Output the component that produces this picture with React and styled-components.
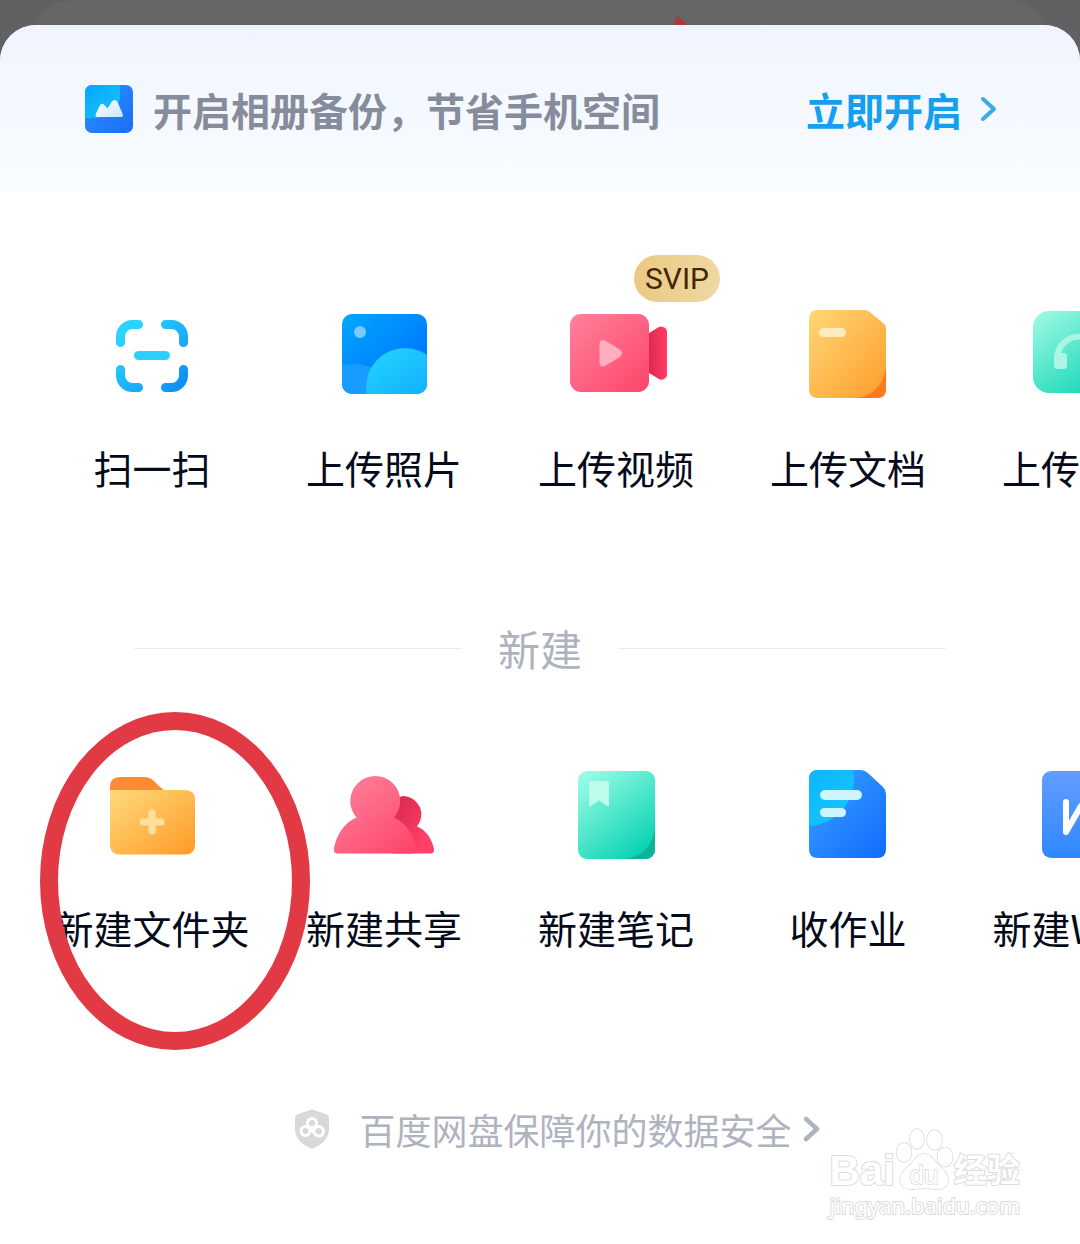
import React from 'react'
import styled, { createGlobalStyle } from 'styled-components';


const GlobalStyle = createGlobalStyle`
    * {
        box-sizing: border-box;
    }
    body {
        margin: 0;
        background: #616164;
        font-family: 'Noto Sans CJK SC', sans-serif;
        color: #050a1a;
    }
    button {
        margin: 0;
        padding: 0;
        border: 0;
        background: none;
        font: inherit;
        color: inherit;
        cursor: pointer;
    }
    svg {
        display: block;
        flex: none;
    }
`

const Page = styled.div`
    position: relative;
    display: flex;
    flex-direction: column;
    min-height: 100vh;
    overflow: hidden;
`

const PageBehind = styled.div`
    position: absolute;
    top: 0;
    left: 32px;
    right: 32px;
    height: 80px;
    border-radius: 40px 40px 0 0;
    background: #666;
`

const ArrowTip = styled.svg`
    position: absolute;
    top: 15px;
    left: 62%;
`

const Sheet = styled.main`
    position: relative;
    flex: 1;
    margin-top: 25px;
    border-radius: 36px 36px 0 0;
    background: #fff;
    overflow: hidden;
`

const Banner = styled.section`
    display: flex;
    align-items: center;
    height: 167px;
    padding: 0 83px 0 85px;
    background: linear-gradient(#f0f4ff, #f9fdff);
`

const BannerText = styled.p`
    flex: 1;
    margin: 0 0 0 20px;
    font-size: 39px;
    font-weight: 700;
    line-height: 48px;
    color: #878c9c;
`

const BannerLink = styled.a`
    display: flex;
    align-items: center;
    gap: 18px;
    font-size: 39px;
    font-weight: 700;
    line-height: 48px;
    color: #159ff0;
    text-decoration: none;
`

const Section = styled.section`
    position: relative;
`

const Row = styled.div`
    display: flex;
    padding: ${props => props.$top}px 0 12px 36px;
    overflow: hidden;
`

const Item = styled.button`
    position: relative;
    display: flex;
    flex: 0 0 calc(100% / 4.5);
    flex-direction: column;
    align-items: center;
    gap: 36px;
    font-size: 39px;
    line-height: 48px;
    white-space: nowrap;
`

const Badge = styled.span`
    position: absolute;
    top: -48px;
    left: calc(50% + 18px);
    padding: 0 11px;
    border-radius: 24px;
    background: linear-gradient(90deg, #eac983, #efd8a2);
    font-family: Roboto, sans-serif;
    font-size: 30px;
    line-height: 47px;
    color: #432508;
`

const Divider = styled.div`
    display: flex;
    align-items: center;
    gap: 36px;
    padding: 0 134px;
    margin-top: 119px;
    &::before, &::after {
        content: '';
        flex: 1;
        height: 1px;
        background: #ededf0;
    }
`

const DividerTitle = styled.h2`
    margin: 0;
    font-size: 42px;
    font-weight: 400;
    line-height: 52px;
    color: #afb3bf;
`

const Ring = styled.svg`
    position: absolute;
    top: 38px;
    left: 40px;
    pointer-events: none;
`

const Safety = styled.a`
    display: flex;
    align-items: center;
    justify-content: center;
    margin-top: 142px;
    padding-left: 34px;
    font-size: 36px;
    line-height: 48px;
    color: #afb3bf;
    text-decoration: none;
    svg:first-child {
        margin-right: 29px;
    }
    svg:last-child {
        margin-left: 11px;
    }
`

const Watermark = styled.div`
    position: absolute;
    right: 60px;
    bottom: 25px;
    font-family: 'Liberation Sans', 'Noto Sans CJK SC', sans-serif;
    color: #fff;
    -webkit-text-stroke: 2px #dcdcdc;
    paint-order: stroke fill;
`

const WatermarkTop = styled.div`
    display: flex;
    align-items: flex-end;
    font-size: 42px;
    font-weight: 700;
    line-height: 40px;
`

const WatermarkCjk = styled.span`
    font-size: 33px;
`

const WatermarkUrl = styled.div`
    font-family: 'Noto Sans', sans-serif;
    font-size: 22px;
    line-height: 28px;
`


const Gradient = ({id, from, to, x2='1', y2='1'}) => (
    <linearGradient id={id} x1="0" y1="0" x2={x2} y2={y2}>
        <stop offset="0" stopColor={from}/>
        <stop offset="1" stopColor={to}/>
    </linearGradient>
)

const Icon = ({children}) => (
    <svg width="104" height="104" viewBox="0 0 104 104" aria-hidden="true">{children}</svg>
)

const Chevron = ({width, stroke}) => (
    <svg width="17" height="26" viewBox="0 0 17 26" fill="none" stroke={stroke} strokeWidth={width} strokeLinecap="round" strokeLinejoin="round" aria-hidden="true">
        <path d="M3 3l11 10L3 23"/>
    </svg>
)

const AlbumIcon = () => (
    <svg width="48" height="48" viewBox="0 0 48 48" aria-hidden="true">
        <defs>
            <Gradient id="album" from="#2b95ff" to="#1b6cf8"/>
            <Gradient id="albumLight" from="#08a4fb" to="#16c8ff"/>
            <Gradient id="albumHill" from="#fff" to="#c9e4ff"/>
            <clipPath id="albumClip"><rect width="48" height="48" rx="7"/></clipPath>
        </defs>
        <g clipPath="url(#albumClip)">
            <rect width="48" height="48" fill="url(#album)"/>
            <path d="M0 0H35V10C35 24 24 33 8 33H0Z" fill="url(#albumLight)"/>
        </g>
        <path d="M12.500 32C10.500 32 10 30.500 11 28.500L14.500 21Q17 17 20 20.500L22.500 23.500L26.500 17Q29.500 13 32.500 17L37.500 28.500C38.500 30.500 38 32 36 32Z" fill="url(#albumHill)"/>
    </svg>
)

const ScanIcon = () => (
    <Icon>
        <defs>
            <linearGradient id="scan" gradientUnits="userSpaceOnUse" x1="28" y1="30" x2="80" y2="80">
                <stop offset="0" stopColor="#2bd3ff"/>
                <stop offset="1" stopColor="#0d93f5"/>
            </linearGradient>
        </defs>
        <g fill="none" stroke="url(#scan)" strokeWidth="9" strokeLinecap="round">
            <path d="M20.500 39.500V33.500A12 12 0 0 1 32.500 21.500h6"/>
            <path d="M65.500 21.500H71.500A12 12 0 0 1 83.500 33.500v6"/>
            <path d="M83.500 66.500V72.500A12 12 0 0 1 71.500 84.500h-6"/>
            <path d="M38.500 84.500H32.500A12 12 0 0 1 20.500 72.500v-6"/>
        </g>
        <rect x="34" y="48" width="36" height="9" rx="4.500" fill="#2bd0ff"/>
    </Icon>
)

const PhotoIcon = () => (
    <Icon>
        <defs>
            <Gradient id="photo" from="#00a8ff" to="#0068ff"/>
            <Gradient id="photoHill" from="#25d6ff" to="#0ba4ff" x2="0.7"/>
            <clipPath id="photoClip"><rect x="10" y="11" width="85" height="80" rx="10"/></clipPath>
        </defs>
        <g clipPath="url(#photoClip)">
            <rect x="10" y="11" width="85" height="80" fill="url(#photo)"/>
            <circle cx="22" cy="106" r="45" fill="#169dff"/>
            <circle cx="73" cy="84" r="39" fill="url(#photoHill)"/>
        </g>
        <circle cx="28" cy="29" r="6" fill="#77cbff"/>
    </Icon>
)

const VideoIcon = () => (
    <Icon>
        <defs>
            <Gradient id="video" from="#ff829b" to="#ff446a"/>
            <Gradient id="videoTail" from="#d82650" to="#ff3c66" y2="0"/>
        </defs>
        <path d="M82 32L94 24.500Q97 23 99 24Q103 25 103 29V71Q103 75 99 76.500Q97 77.500 94 75.500L82 68Z" fill="url(#videoTail)"/>
        <rect x="6" y="11" width="79" height="78" rx="11" fill="url(#video)"/>
        <path d="M35.500 41Q36 35.500 41 37.500L56 46.500Q60 50 56 54L41 63Q36 64.500 35.500 60Z" fill="#ffaec0"/>
    </Icon>
)

const DocIcon = () => (
    <Icon>
        <defs>
            <Gradient id="doc" from="#ffd777" to="#ff9d2a"/>
            <clipPath id="docClip"><path d="M22 7H68Q72 7 75 10L87 20Q90 22 90 26V86Q90 95 81 95H22Q13 95 13 86V16Q13 7 22 7Z"/></clipPath>
        </defs>
        <g clipPath="url(#docClip)">
            <rect x="13" y="7" width="77" height="88" fill="url(#doc)"/>
            <path d="M90 63C88 83 75 95 57 95H90Z" fill="#ff7a1c"/>
        </g>
        <rect x="23" y="25" width="27" height="9" rx="4.500" fill="#ffebbd"/>
    </Icon>
)

const AudioIcon = () => (
    <Icon>
        <defs>
            <Gradient id="audio" from="#a0fbe4" to="#0dd3b3" x2="0.8"/>
        </defs>
        <rect x="5" y="8" width="94" height="82" rx="16" fill="url(#audio)"/>
        <path d="M29.500 56V54A22.500 20.500 0 0 1 74.500 54V56" fill="none" stroke="#abf5e4" strokeWidth="6"/>
        <rect x="26" y="50" width="13" height="16" rx="3" fill="#abf5e4"/>
        <rect x="65" y="50" width="13" height="16" rx="3" fill="#abf5e4"/>
    </Icon>
)

const FolderIcon = () => (
    <Icon>
        <defs>
            <Gradient id="folder" from="#ffda7c" to="#ff9a26"/>
        </defs>
        <path d="M10 30V24Q10 14 20 14H44Q50 14 54 18L60 24Q63 27 67 28V30Z" fill="#ff8c33"/>
        <path d="M10 27H85Q95 27 95 37V81.500Q95 91.500 85 91.500H20Q10 91.500 10 81.500Z" fill="url(#folder)"/>
        <path d="M52 50V68M43 59H61" stroke="#ffdf9e" strokeWidth="7" strokeLinecap="round"/>
    </Icon>
)

const PeopleIcon = () => (
    <Icon>
        <defs>
            <linearGradient id="people" gradientUnits="userSpaceOnUse" x1="20" y1="20" x2="78" y2="92">
                <stop offset="0" stopColor="#ff7c96"/>
                <stop offset="1" stopColor="#ff436a"/>
            </linearGradient>
            <linearGradient id="peopleBack" gradientUnits="userSpaceOnUse" x1="62" y1="50" x2="96" y2="72">
                <stop offset="0" stopColor="#dc2b53"/>
                <stop offset="1" stopColor="#ff4069"/>
            </linearGradient>
        </defs>
        <path d="M71 33A18.500 18.500 0 0 1 85 63.500C94 67 100 76 102 86Q102.500 90.500 98 90.500H60V36Z" fill="url(#peopleBack)"/>
        <path d="M24.500 54.500A25 25 0 1 1 62 54.500C74 60 82 72 84 85Q84.500 90.500 80 90.500H6Q1 90.500 2 85C5 71 12 60 24.500 54.500Z" fill="url(#people)"/>
    </Icon>
)

const NoteIcon = () => (
    <Icon>
        <defs>
            <Gradient id="note" from="#a2ffe9" to="#0bd3b3" x2="0.7"/>
            <clipPath id="noteClip"><rect x="14" y="8" width="77" height="88" rx="9"/></clipPath>
        </defs>
        <g clipPath="url(#noteClip)">
            <rect x="14" y="8" width="77" height="88" fill="url(#note)"/>
            <path d="M91 64C89 84 76 96 58 96H91Z" fill="#11b197"/>
        </g>
        <path d="M27 18H43Q45 18 45 20V44L35 37.500L25 44V20Q25 18 27 18Z" fill="#bdfbed"/>
    </Icon>
)

const HomeworkIcon = () => (
    <Icon>
        <defs>
            <Gradient id="work" from="#39a3ff" to="#116bff"/>
            <Gradient id="workLight" from="#05a5fb" to="#18c8ff"/>
            <clipPath id="workClip"><path d="M22 7H64Q69 7 73 11L87 24Q90 27 90 31V86Q90 95 81 95H22Q13 95 13 86V16Q13 7 22 7Z"/></clipPath>
        </defs>
        <g clipPath="url(#workClip)">
            <rect x="13" y="7" width="77" height="88" fill="url(#work)"/>
            <circle cx="11" cy="16" r="47" fill="url(#workLight)"/>
        </g>
        <rect x="24" y="27" width="42" height="10" rx="5" fill="#cdf5ff"/>
        <rect x="24" y="45" width="26" height="9" rx="4.500" fill="#cdf5ff"/>
    </Icon>
)

const WordIcon = () => (
    <Icon>
        <defs>
            <Gradient id="word" from="#629dff" to="#2f88ff" x2="0"/>
        </defs>
        <rect x="14" y="8" width="76" height="87" rx="9" fill="url(#word)"/>
        <path d="M38 39V69L53 43L66 69V39" fill="none" stroke="#fff" strokeWidth="6" strokeLinecap="round" strokeLinejoin="round"/>
    </Icon>
)

const ShieldIcon = () => (
    <svg width="36" height="40" viewBox="0 0 36 40" aria-hidden="true">
        <path d="M18 0.500Q19 0.500 20 1L33 5.500Q35 6.500 35 8.500V20C35 30 27 36 20 39Q18 40 16 39C9 36 1 30 1 20V8.500Q1 6.500 3 5.500L16 1Q17 0.500 18 0.500Z" fill="#d9d9d9"/>
        <g fill="none" stroke="#fff" strokeWidth="3">
            <circle cx="18" cy="14" r="4.500"/>
            <circle cx="11.500" cy="22" r="4.500"/>
            <path d="M15 19L20.500 24A4.700 4.700 0 1 0 21 19.500L19 21.500"/>
        </g>
    </svg>
)

const PawLogo = () => (
    <svg width="59" height="63" viewBox="0 0 59 63" fill="#fff" stroke="#dadada" strokeWidth="1.500" role="img" aria-label="du">
        <ellipse cx="22" cy="11" rx="7" ry="10"/>
        <ellipse cx="39.500" cy="12" rx="7.500" ry="10"/>
        <ellipse cx="9" cy="24.500" rx="7.500" ry="9.500"/>
        <ellipse cx="50" cy="29" rx="7.500" ry="9.500"/>
        <path d="M29 26C36 26 39 32 43 37C48 42 54 46 53 53C52 60 46 62 40 61C33 60 25 60 18 61C10 62 5 58 5 51C5 44 11 41 16 36C20 31 23 26 29 26Z"/>
        <text x="29" y="56" textAnchor="middle" fontSize="26" fontWeight="400">du</text>
    </svg>
)


const uploadItems = [
    {label: '扫一扫', icon: ScanIcon},
    {label: '上传照片', icon: PhotoIcon},
    {label: '上传视频', icon: VideoIcon, badge: 'SVIP'},
    {label: '上传文档', icon: DocIcon},
    {label: '上传音频', icon: AudioIcon},
]

const createItems = [
    {label: '新建文件夹', icon: FolderIcon},
    {label: '新建共享', icon: PeopleIcon},
    {label: '新建笔记', icon: NoteIcon},
    {label: '收作业', icon: HomeworkIcon},
    {label: '新建Word', icon: WordIcon},
]

const ItemRow = ({items, top}) => (
    <Row $top={top}>
        {items.map(({label, icon: ItemIcon, badge}) => (
            <Item key={label} type="button">
                <ItemIcon/>
                {badge ? <Badge>{badge}</Badge> : null}
                <span>{label}</span>
            </Item>
        ))}
    </Row>
)


const App = () => {
    return(
        <Page>
            <GlobalStyle/>
            <PageBehind/>
            <ArrowTip width="20" height="14" viewBox="0 0 20 14" aria-hidden="true">
                <path d="M2 14L6 3Q7 0 10 3L20 12V14Z" fill="#a8393f"/>
            </ArrowTip>
            <Sheet>
                <Banner>
                    <AlbumIcon/>
                    <BannerText>开启相册备份，节省手机空间</BannerText>
                    <BannerLink href="#backup">
                        立即开启
                        <Chevron width={4} stroke="#3fa9e6"/>
                    </BannerLink>
                </Banner>
                <ItemRow items={uploadItems} top={111}/>
                <Divider>
                    <DividerTitle>新建</DividerTitle>
                </Divider>
                <Section>
                    <ItemRow items={createItems} top={89}/>
                    <Ring width="270" height="338" viewBox="0 0 270 338" aria-hidden="true">
                        <ellipse cx="135" cy="169" rx="126" ry="160" fill="none" stroke="#e23a45" strokeWidth="18"/>
                    </Ring>
                </Section>
                <Safety href="#safety">
                    <ShieldIcon/>
                    百度网盘保障你的数据安全
                    <Chevron width={4.5} stroke="#afb3bf"/>
                </Safety>
                <Watermark>
                    <WatermarkTop>
                        <span>Bai</span>
                        <PawLogo/>
                        <WatermarkCjk>经验</WatermarkCjk>
                    </WatermarkTop>
                    <WatermarkUrl>jingyan.baidu.com</WatermarkUrl>
                </Watermark>
            </Sheet>
        </Page>
    )
}


export default App;
